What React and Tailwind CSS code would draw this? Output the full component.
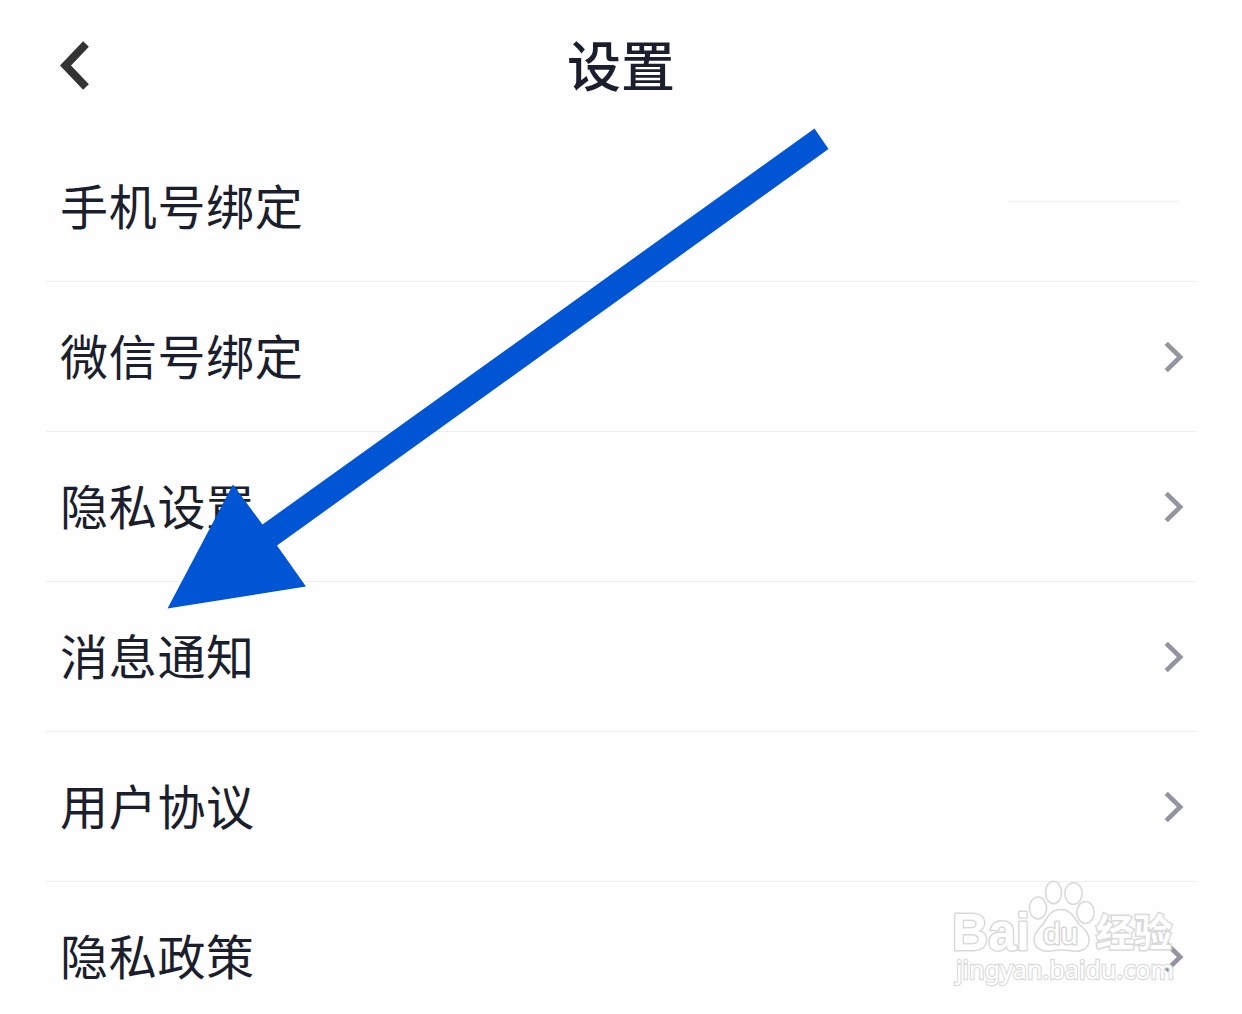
const settings = [
  { id: 'phone', label: '手机号绑定', arrow: false },
  { id: 'wechat', label: '微信号绑定', arrow: true },
  { id: 'privacy', label: '隐私设置', arrow: true },
  { id: 'notifications', label: '消息通知', arrow: true },
  { id: 'agreement', label: '用户协议', arrow: true },
  { id: 'policy', label: '隐私政策', arrow: true },
];

const BackIcon = () => (
  <svg className="h-[50px] w-[31px]" viewBox="0 0 31 50" fill="none">
    <path d="M27 3 L6.5 24.5 L27 46" stroke="#333333" strokeWidth="8" />
  </svg>
);

const ChevronIcon = () => (
  <svg className="h-8 w-5" viewBox="0 0 20 32" fill="none">
    <path d="M2.2 2.3 L16.2 16 L2.2 29.7" stroke="#9294a0" strokeWidth="4.6" />
  </svg>
);

const SettingRow = ({ item }) => (
  <li className="flex h-[150px] items-center justify-between border-b border-[#eeeeef] pl-[14px] pr-[13px]">
    <span className="pb-[5px] text-[48px] leading-[72px] tracking-[0.7px]">{item.label}</span>
    {item.arrow ? <ChevronIcon /> : <span className="mb-[10px] mr-[5px] h-px w-[170px] bg-[#f1f1f1]" />}
  </li>
);

// Arrow pointing at the notifications row
const PointerArrow = () => (
  <svg className="absolute left-0 top-0 h-[1014px] w-[1242px]" viewBox="0 0 1242 1014">
    <path d="M814.5 128.5 L828.5 149 L277 545.5 L306 586.5 L167.5 608.5 L233 484.5 L262.5 524.5 Z" fill="#0055d5" />
  </svg>
);

const Watermark = () => (
  <svg
    className="absolute left-[942px] top-[872px] h-[122px] w-[244px]"
    viewBox="942 872 244 122"
    fill="#ffffff"
    stroke="#d9d9d9"
    strokeWidth="1.6"
  >
    <ellipse cx="1038" cy="908" rx="8.6" ry="11" />
    <ellipse cx="1053.5" cy="892.5" rx="8" ry="11.3" />
    <ellipse cx="1073.5" cy="893.5" rx="8.6" ry="10.8" />
    <ellipse cx="1085.5" cy="912.5" rx="8.6" ry="11" />
    <path d="M1061 909.5 C1071 909.5 1074 918 1079 924 C1084 929 1090 933 1089 941 C1088 950 1080 952 1073 951 C1065 949.5 1059 949.5 1051 951 C1042 952.5 1034 948 1034 939 C1034 932 1041 928 1045 921 C1049 914 1053 909.5 1061 909.5 Z" />
    <g className="font-['Liberation_Sans',sans-serif] font-bold [paint-order:stroke]" strokeWidth="3" strokeLinejoin="round">
      <text x="952" y="949.5" fontSize="51" textLength="78" lengthAdjust="spacingAndGlyphs">Bai</text>
      <text x="1043" y="944" fontSize="29" textLength="35" lengthAdjust="spacingAndGlyphs" className="font-normal">du</text>
    </g>
    <text x="1096" y="946" fontSize="38" textLength="76" strokeWidth="3" className="font-['Noto_Sans_CJK_SC',sans-serif] font-bold [paint-order:stroke]">经验</text>
    <text x="956" y="979" fontSize="26" textLength="218" lengthAdjust="spacingAndGlyphs" strokeWidth="2.4" stroke="#dadada" className="font-['Noto_Sans',sans-serif] font-normal [paint-order:stroke]">jingyan.baidu.com</text>
  </svg>
);

const App = () => {
  return (
    <div className="relative h-[1014px] w-[1242px] overflow-hidden bg-[#fefefe] font-['Noto_Sans_CJK_SC',sans-serif] text-[#1b1e2c]">
      <header className="grid h-[132px] grid-cols-[1fr_auto_1fr] items-center px-[59px]">
        <button type="button" aria-label="返回" className="justify-self-start">
          <BackIcon />
        </button>
        <h1 className="pb-1 text-[54px] font-medium leading-[80px]">设置</h1>
      </header>

      <ul className="ml-[46px] w-[1151px]">
        {settings.map((item) => (
          <SettingRow key={item.id} item={item} />
        ))}
      </ul>

      <PointerArrow />
      <Watermark />
    </div>
  );
};

export default App;
